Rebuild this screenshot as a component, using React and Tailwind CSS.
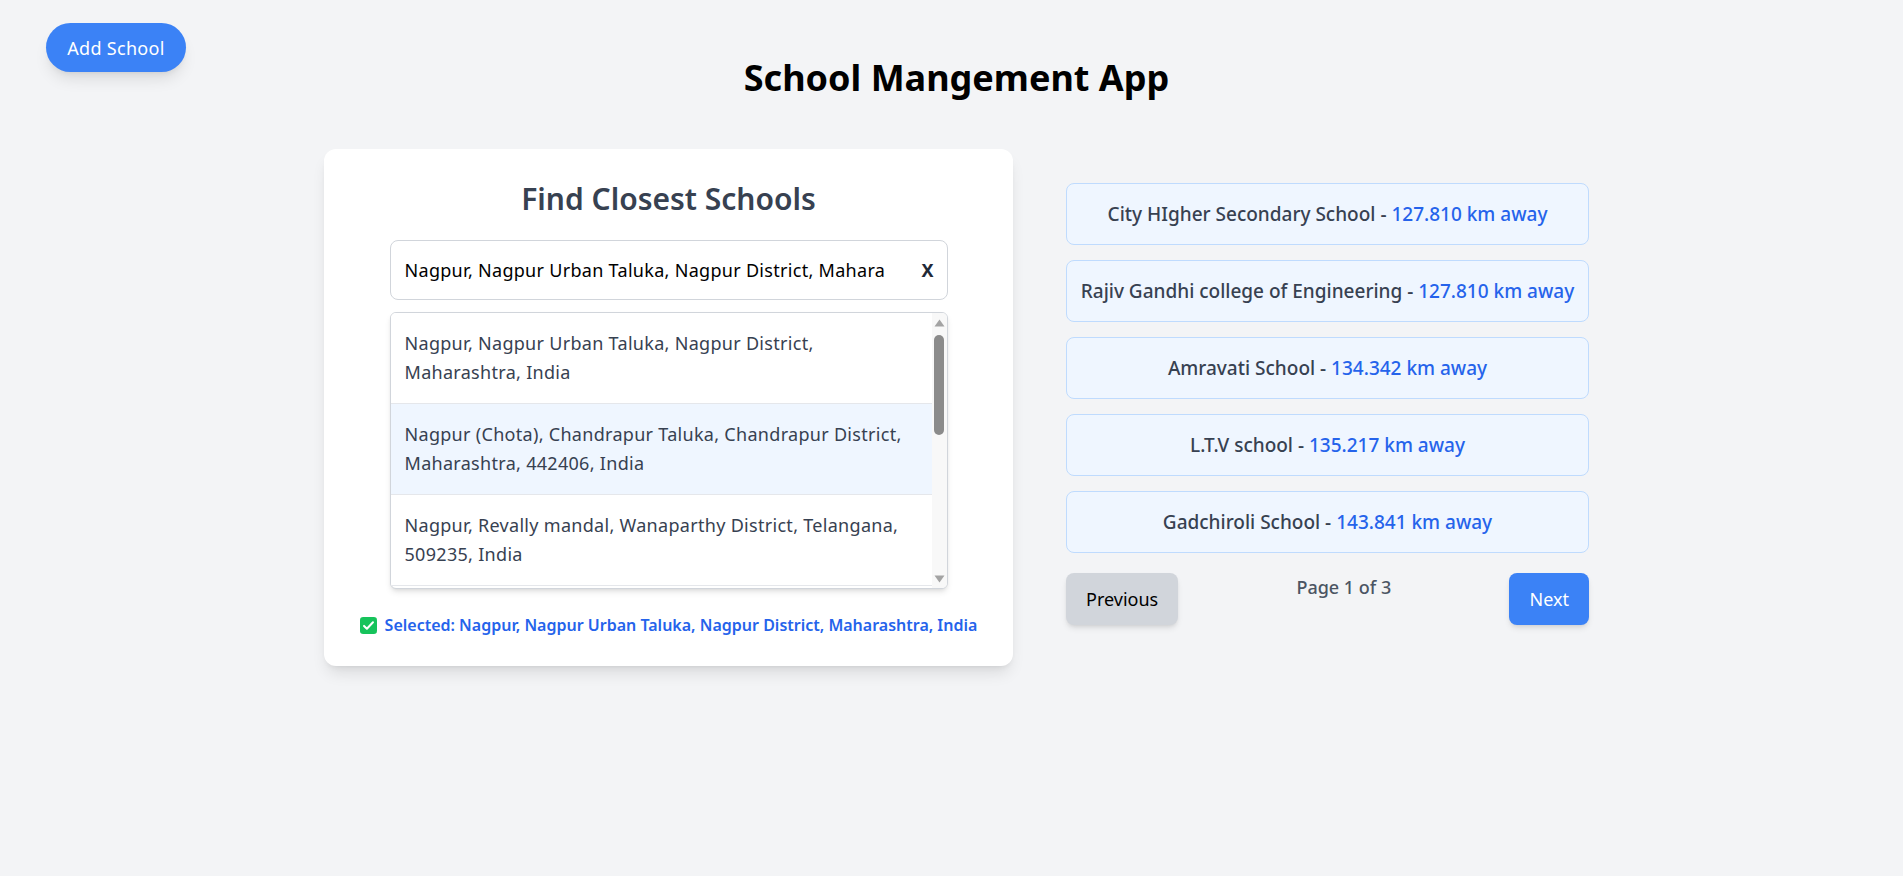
const suggestions = [
  { text: "Nagpur, Nagpur Urban Taluka, Nagpur District, Maharashtra, India", active: false },
  { text: "Nagpur (Chota), Chandrapur Taluka, Chandrapur District, Maharashtra, 442406, India", active: true },
  { text: "Nagpur, Revally mandal, Wanaparthy District, Telangana, 509235, India", active: false },
];

const schools = [
  { name: "City HIgher Secondary School", distance: "127.810" },
  { name: "Rajiv Gandhi college of Engineering", distance: "127.810" },
  { name: "Amravati School", distance: "134.342" },
  { name: "L.T.V school", distance: "135.217" },
  { name: "Gadchiroli School", distance: "143.841" },
];

const CheckIcon = () => (
  <svg width="17" height="17" viewBox="0 0 16 16" className="shrink-0">
    <rect width="16" height="16" rx="3" fill="#16c35b" />
    <path d="M3.8 8.4l2.7 2.7L12.2 5" stroke="white" strokeWidth="1.9" fill="none" strokeLinecap="round" strokeLinejoin="round" />
  </svg>
);

// classic scrollbar drawn next to the list
const FakeScrollbar = () => (
  <div className="w-[15px] shrink-0 bg-[#f8f8f8] flex flex-col items-center pt-[6px] pb-[5px]">
    <svg width="11" height="8" viewBox="0 0 11 8">
      <path d="M5.5 0.5L10.5 7.5H0.5Z" fill="#a3a3a3" />
    </svg>
    <div className="mt-[8px] h-[100px] w-[10px] rounded-full bg-[#8b8b8b]" />
    <svg width="11" height="8" viewBox="0 0 11 8" className="mt-auto">
      <path d="M0.5 0.5H10.5L5.5 7.5Z" fill="#a3a3a3" />
    </svg>
  </div>
);

const App = () => {
  return (
    <div className="relative min-h-screen bg-[#f3f4f6] font-['Noto_Sans',sans-serif]">
      {/* Add school button */}
      <button className="absolute left-[46px] top-[23px] h-[49px] w-[140px] rounded-full bg-[#3b82f6] text-white text-lg tracking-[0.3px] shadow-lg">
        Add School
      </button>

      <div className="pt-[58px] pl-[10px]">
        <h1 className="text-center text-4xl leading-10 font-bold text-black">School Mangement App</h1>

        <div className="mt-[51px] flex justify-center items-start gap-[53px]">
          {/* Search card */}
          <div className="w-[689px] bg-white rounded-xl shadow-lg px-8 pt-8 pb-[29px]">
            <h2 className="text-center text-3xl font-semibold text-[#374151]">Find Closest Schools</h2>

            <div className="relative mx-auto mt-[23px] w-[558px]">
              <input
                readOnly
                value="Nagpur, Nagpur Urban Taluka, Nagpur District, Maharashtra, India"
                className="w-full h-[60px] pl-[14px] pr-[62px] border border-[#d1d5db] rounded-lg text-lg tracking-[0.3px] text-black bg-white outline-none"
              />
              <span className="absolute right-[14px] top-1/2 -translate-y-1/2 text-lg font-bold text-[#1f2937]">X</span>
            </div>

            <div className="mx-auto mt-3 w-[558px] h-[277px] flex overflow-hidden border border-[#d1d5db] rounded-md shadow-md bg-white">
              <ul className="flex-1 overflow-hidden">
                {suggestions.map((s, i) => (
                  <li
                    key={i}
                    className={`px-[14px] py-4 text-lg leading-[29px] tracking-[0.3px] text-[#374151] border-b border-[#e5e7eb] ${s.active ? "bg-[#eff6ff]" : "bg-white"}`}
                  >
                    {s.text}
                  </li>
                ))}
              </ul>
              <FakeScrollbar />
            </div>

            <div className="mt-6 flex items-center justify-center gap-2 whitespace-nowrap text-[#2563eb] font-semibold text-base">
              <CheckIcon />
              <span>Selected: Nagpur, Nagpur Urban Taluka, Nagpur District, Maharashtra, India</span>
            </div>
          </div>

          {/* Results */}
          <div className="w-[523px] mt-[34px]">
            <div className="flex flex-col gap-[15px]">
              {schools.map((s) => (
                <div key={s.name} className="px-2 py-4 bg-[#eff6ff] border border-[#bfdbfe] rounded-lg text-center whitespace-nowrap text-[19px] leading-7 font-medium text-[#374151]">
                  {s.name} - <span className="text-[#2563eb]">{s.distance} km away</span>
                </div>
              ))}
            </div>

            <div className="mt-5 flex justify-between">
              <button className="px-5 py-3 rounded-lg bg-[#d1d5db] text-black text-lg shadow-md">Previous</button>
              <span className="text-lg font-medium text-[#4b5563]">Page 1 of 3</span>
              <button className="px-5 py-3 rounded-lg bg-[#3b82f6] text-white text-lg shadow-md">Next</button>
            </div>
          </div>
        </div>
      </div>
    </div>
  );
};

export default App;
